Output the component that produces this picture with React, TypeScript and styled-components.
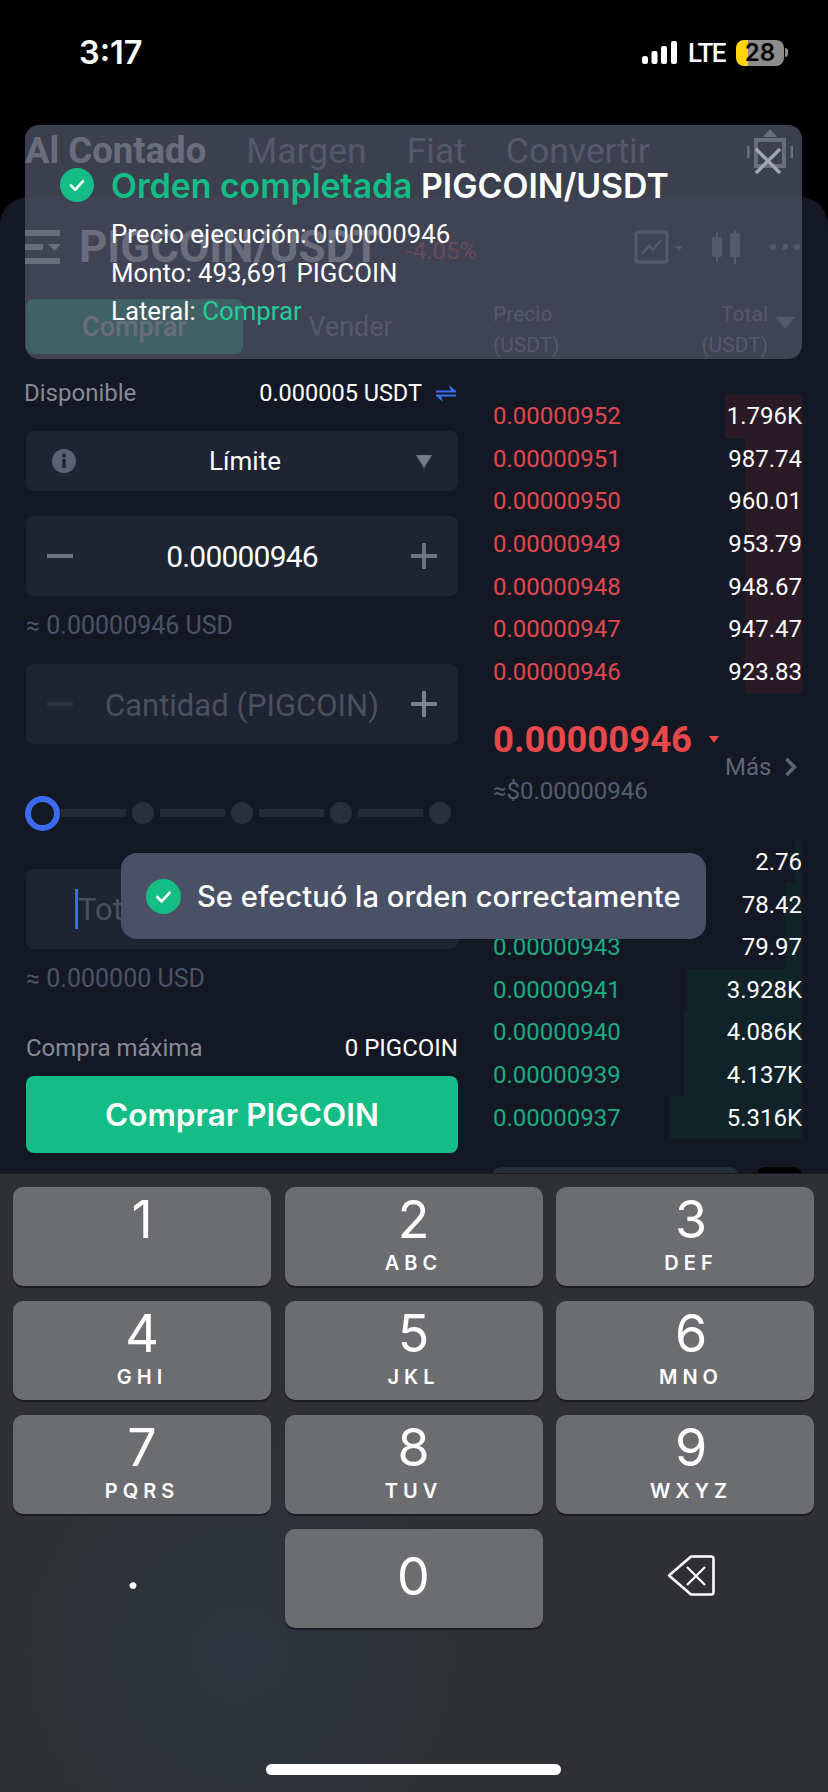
import React from 'react';
import styled, {createGlobalStyle} from 'styled-components';

const GREEN = '#14bd85';
const BLUE = '#3b6cf0';
const RED = '#e0484e';

const GlobalStyle = createGlobalStyle`
  html, body {
    margin: 0;
    padding: 0;
    background: #000;
  }
  * {
    box-sizing: border-box;
  }
`;

const asks = [
  ['0.00000952', '1.796K', 77],
  ['0.00000951', '987.74', 57],
  ['0.00000950', '960.01', 57],
  ['0.00000949', '953.79', 57],
  ['0.00000948', '948.67', 57],
  ['0.00000947', '947.47', 57],
  ['0.00000946', '923.83', 57],
] as const;

const bids = [
  ['0.00000945', '2.76', 7],
  ['0.00000944', '78.42', 17],
  ['0.00000943', '79.97', 17],
  ['0.00000941', '3.928K', 115],
  ['0.00000940', '4.086K', 118],
  ['0.00000939', '4.137K', 118],
  ['0.00000937', '5.316K', 132],
] as const;

const keys = [
  ['1', ''],
  ['2', 'ABC'],
  ['3', 'DEF'],
  ['4', 'GHI'],
  ['5', 'JKL'],
  ['6', 'MNO'],
  ['7', 'PQRS'],
  ['8', 'TUV'],
  ['9', 'WXYZ'],
];

const CheckBadge = ({size}: {size: number}) => (
  <svg width={size} height={size} viewBox="0 0 34 34">
    <circle cx="17" cy="17" r="17" fill={GREEN} />
    <path d="M11 17.5l4.2 4.3 7.8-8.6" fill="none" stroke="#fff" strokeWidth="2.6" strokeLinecap="round" strokeLinejoin="round" />
  </svg>
);

const Minus = ({color}: {color: string}) => (
  <svg width="26" height="26" viewBox="0 0 26 26">
    <path d="M0 13h26" stroke={color} strokeWidth="4" />
  </svg>
);

const Plus = ({color}: {color: string}) => (
  <svg width="26" height="26" viewBox="0 0 26 26">
    <path d="M0 13h26M13 0v26" stroke={color} strokeWidth="4" />
  </svg>
);

const App: React.FC = () => (
  <Phone>
    <GlobalStyle />
    <StatusBar>
      <Clock>3:17</Clock>
      <StatusRight>
        <svg width="35" height="23" viewBox="0 0 35 23">
          <rect x="0" y="15" width="6" height="8" rx="2.5" fill="#fff" />
          <rect x="9.5" y="10" width="6" height="13" rx="2" fill="#fff" />
          <rect x="19" y="5" width="6" height="18" rx="2" fill="#fff" />
          <rect x="29" y="0" width="6" height="23" rx="2" fill="#fff" />
        </svg>
        <Network>LTE</Network>
        <Battery $level={25}>28</Battery>
        <BatteryNub />
      </StatusRight>
    </StatusBar>

    <TopTabs>
      <TopTab $active>Al Contado</TopTab>
      <TopTab>Margen</TopTab>
      <TopTab>Fiat</TopTab>
      <TopTab>Convertir</TopTab>
      <BotIcon width="46" height="44" viewBox="0 0 46 44">
        <path d="M23 0l7 8H16z" fill="#fff" />
        <path d="M9 11h28v26H9z" fill="none" stroke="#fff" strokeWidth="4" />
        <path d="M1 17v12M45 17v12" stroke="#fff" strokeWidth="3" />
      </BotIcon>
    </TopTabs>

    <Sheet>
      <PairHeader>
        <svg width="36" height="34" viewBox="0 0 36 34">
          <path d="M0 0h35v6H0zM0 14h18v6H0zM0 28h35v6H0z" fill="#fff" />
          <path d="M23 14h13l-6.5 7z" fill="#fff" />
        </svg>
        <PairName>PIGCOIN/USDT</PairName>
        <PairChange>-4.05%</PairChange>
        <PairTools>
          <svg width="50" height="34" viewBox="0 0 50 34" fill="none" stroke="#8b90a0">
            <rect x="2" y="2" width="31" height="30" rx="2" strokeWidth="3.5" />
            <path d="M8 24l7-8 4 4 8-10" strokeWidth="2.5" />
            <path d="M41 16h8l-4 5z" fill="#8b90a0" stroke="none" />
          </svg>
          <svg width="30" height="34" viewBox="0 0 30 34" fill="#8b90a0">
            <rect x="0" y="7" width="10" height="20" rx="2" />
            <rect x="4" y="2" width="2" height="30" />
            <rect x="18" y="3" width="10" height="24" rx="2" />
            <rect x="22" y="0" width="2" height="34" />
          </svg>
          <svg width="30" height="6" viewBox="0 0 30 6" fill="#8b90a0">
            <circle cx="3" cy="3" r="3" />
            <circle cx="15" cy="3" r="3" />
            <circle cx="27" cy="3" r="3" />
          </svg>
        </PairTools>
      </PairHeader>

      <Columns>
        <FormColumn>
          <SideTabs>
            <SideTab $active>Comprar</SideTab>
            <SideTab>Vender</SideTab>
          </SideTabs>

          <BalanceRow>
            <Muted>Disponible</Muted>
            <BalanceValue>
              0.000005 USDT
              <svg width="20" height="17" viewBox="0 0 20 17" fill={BLUE}>
                <path d="M0 5.5h20v2H0zM13 0l7 6h-5zM0 9.5h20v2H0zM7 17l-7-6h5z" />
              </svg>
            </BalanceValue>
          </BalanceRow>

          <Select>
            <svg width="24" height="24" viewBox="0 0 24 24">
              <circle cx="12" cy="12" r="12" fill="#5a6173" />
              <rect x="10.2" y="10" width="3.6" height="9" fill="#1e2431" />
              <circle cx="12" cy="6.6" r="2" fill="#1e2431" />
            </svg>
            <SelectLabel>Límite</SelectLabel>
            <SelectCaret />
          </Select>

          <Stepper $mt={25}>
            <Minus color="#6c7282" />
            <StepperValue>0.00000946</StepperValue>
            <Plus color="#6c7282" />
          </Stepper>
          <Hint>≈ 0.00000946 USD</Hint>

          <Stepper $mt={23}>
            <Minus color="#2b3240" />
            <StepperValue $placeholder>Cantidad (PIGCOIN)</StepperValue>
            <Plus color="#7a7f8c" />
          </Stepper>

          <Slider>
            <SliderRing />
            <SliderSegment />
            <SliderDot />
            <SliderSegment />
            <SliderDot />
            <SliderSegment />
            <SliderDot />
            <SliderSegment />
            <SliderDot />
          </Slider>

          <TotalInput>
            <Caret />
            <TotalPlaceholder>Total (USDT)</TotalPlaceholder>
          </TotalInput>
          <Hint>≈ 0.000000 USD</Hint>

          <MaxRow>
            <Muted>Compra máxima</Muted>
            <MaxValue>0 PIGCOIN</MaxValue>
          </MaxRow>
          <BuyButton>Comprar PIGCOIN</BuyButton>
        </FormColumn>

        <BookColumn>
          <BookHead>
            <span>
              Precio
              <br />
              (USDT)
            </span>
            <BookHeadTotal>
              <span>
                Total
                <br />
                (USDT)
              </span>
              <HeadCaret />
            </BookHeadTotal>
          </BookHead>

          <Rows $mt={34}>
            {asks.map(([price, total, depth]) => (
              <BookRow key={price} $depth={depth} $tint="#2a1a25">
                <BookPrice $color={RED}>{price}</BookPrice>
                <BookTotal>{total}</BookTotal>
              </BookRow>
            ))}
          </Rows>

          <Mid>
            <div>
              <MidPrice>
                0.00000946
                <MidArrow />
              </MidPrice>
              <MidFiat>≈$0.00000946</MidFiat>
            </div>
            <MoreLink>
              Más
              <svg width="13" height="20" viewBox="0 0 13 20" fill="none">
                <path d="M2.5 2l8 8-8 8" stroke="#5f6676" strokeWidth="3.5" />
              </svg>
            </MoreLink>
          </Mid>

          <Rows $mt={35}>
            {bids.map(([price, total, depth]) => (
              <BookRow key={price} $depth={depth} $tint="#102328">
                <BookPrice $color="#1cab83">{price}</BookPrice>
                <BookTotal>{total}</BookTotal>
              </BookRow>
            ))}
          </Rows>

          <BookFooter>
            <FooterField />
            <FooterToggle />
          </BookFooter>
        </BookColumn>
      </Columns>
    </Sheet>

    <Keyboard>
      <KeyGrid>
        {keys.map(([digit, letters]) => (
          <Key key={digit}>
            <KeyDigit>{digit}</KeyDigit>
            <KeyLetters>{letters}</KeyLetters>
          </Key>
        ))}
        <PlainKey>
          <PeriodGlyph>.</PeriodGlyph>
        </PlainKey>
        <Key $center>
          <KeyDigit>0</KeyDigit>
        </Key>
        <PlainKey>
          <BackspaceIcon width="48" height="41" viewBox="0 0 48 41" fill="none" stroke="#fff" strokeWidth="2.6" strokeLinejoin="round">
            <path d="M24 1.5h20a2.5 2.5 0 0 1 2.5 2.5v33a2.5 2.5 0 0 1-2.5 2.5H24L2 20.5z" />
            <path d="M20 12l18 18M38 12L20 30" strokeWidth="2.2" />
          </BackspaceIcon>
        </PlainKey>
      </KeyGrid>
      <HomeIndicator />
    </Keyboard>

    <Banner>
      <BannerClose width="28" height="26" viewBox="0 0 28 26">
        <path d="M2 1l24 24M26 1L2 25" stroke="#a2a5b2" strokeWidth="3.5" />
      </BannerClose>
      <BannerTitle>
        <CheckBadge size={34} />
        <span>
          <TitleAccent>Orden completada</TitleAccent> PIGCOIN/USDT
        </span>
      </BannerTitle>
      <BannerLines>
        <div>Precio ejecución: 0.00000946</div>
        <div>Monto: 493,691 PIGCOIN</div>
        <div>
          Lateral: <LineAccent>Comprar</LineAccent>
        </div>
      </BannerLines>
    </Banner>

    <Toast>
      <CheckBadge size={35} />
      Se efectuó la orden correctamente
    </Toast>
  </Phone>
);

const Phone = styled.div`
  position: relative;
  display: flex;
  flex-direction: column;
  width: 828px;
  height: 1792px;
  overflow: hidden;
  background: #000;
  color: #fff;
  font-family: Roboto, 'Liberation Sans', sans-serif;
`;

const StatusBar = styled.div`
  display: flex;
  flex: none;
  align-items: center;
  justify-content: space-between;
  height: 104px;
  padding: 1px 40px 0 79px;
  font-family: Inter, sans-serif;
`;

const Clock = styled.div`
  font-size: 32.5px;
  font-weight: 600;
`;

const StatusRight = styled.div`
  display: flex;
  align-items: center;
`;

const Network = styled.div`
  margin: 0 11px 0 11px;
  font-family: Roboto, sans-serif;
  font-size: 26px;
  font-weight: 500;
  letter-spacing: -1.5px;
`;

const Battery = styled.div<{$level: number}>`
  width: 48px;
  height: 26px;
  border-radius: 8px;
  background: linear-gradient(
    to right,
    #ffd60a ${p => p.$level}%,
    #8c8c8c ${p => p.$level}%
  );
  color: #000;
  font-size: 24px;
  font-weight: 600;
  line-height: 26px;
  text-align: center;
`;

const BatteryNub = styled.div`
  width: 3px;
  height: 9px;
  margin-left: 1px;
  border-radius: 0 3px 3px 0;
  background: #8c8c8c;
`;

const TopTabs = styled.div`
  display: flex;
  flex: none;
  align-items: center;
  gap: 40px;
  height: 93px;
  padding: 0 35px 0 25px;
`;

const TopTab = styled.div<{$active?: boolean}>`
  color: ${p => (p.$active ? '#fff' : '#8b90a0')};
  font-size: ${p => (p.$active ? 36.5 : 35.5)}px;
  font-weight: ${p => (p.$active ? 700 : 400)};
`;

const BotIcon = styled.svg`
  margin-left: auto;
`;

const Sheet = styled.div`
  display: flex;
  flex-direction: column;
  flex: 1;
  min-height: 0;
  padding: 30px 26px 0;
  border-radius: 28px 28px 0 0;
  background: #141824;
`;

const PairHeader = styled.div`
  display: flex;
  align-items: center;
  height: 40px;
  margin-left: -1px;
`;

const PairName = styled.div`
  margin-left: 18px;
  font-size: 44px;
  font-weight: 700;
`;

const PairChange = styled.div`
  margin: 8px 0 0 26px;
  color: ${RED};
  font-size: 24px;
`;

const PairTools = styled.div`
  display: flex;
  align-items: center;
  gap: 28px;
  margin: 0 2px 0 auto;
`;

const Columns = styled.div`
  display: grid;
  grid-template-columns: 432px 1fr;
  column-gap: 35px;
  margin-top: 32px;
`;

const FormColumn = styled.div`
  display: flex;
  flex-direction: column;
`;

const SideTabs = styled.div`
  display: grid;
  grid-template-columns: 217px 1fr;
  height: 55px;
`;

const SideTab = styled.div<{$active?: boolean}>`
  display: flex;
  align-items: center;
  justify-content: center;
  border-radius: 8px;
  background: ${p => (p.$active ? GREEN : 'transparent')};
  color: ${p => (p.$active ? '#fff' : '#8f95a5')};
  font-size: 27px;
  font-weight: ${p => (p.$active ? 500 : 400)};
`;

const BalanceRow = styled.div`
  display: flex;
  align-items: center;
  justify-content: space-between;
  height: 30px;
  margin: 24px 2px 0 -2px;
`;

const Muted = styled.div`
  color: #858a99;
  font-size: 24px;
`;

const BalanceValue = styled.div`
  display: flex;
  align-items: center;
  gap: 14px;
  font-size: 23.5px;
`;

const Select = styled.div`
  display: grid;
  grid-template-columns: 1fr auto 1fr;
  align-items: center;
  height: 60px;
  margin-top: 23px;
  padding: 0 26px;
  border-radius: 8px;
  background: #1e2431;
`;

const SelectLabel = styled.div`
  margin-left: 6px;
  font-size: 26px;
`;

const SelectCaret = styled.div`
  justify-self: end;
  width: 0;
  height: 0;
  border-top: 13px solid #747a8a;
  border-left: 8px solid transparent;
  border-right: 8px solid transparent;
`;

const Stepper = styled.div<{$mt: number}>`
  display: flex;
  align-items: center;
  justify-content: space-between;
  height: 80px;
  margin-top: ${p => p.$mt}px;
  padding: 0 21px;
  border-radius: 8px;
  background: #1e2431;
`;

const StepperValue = styled.div<{$placeholder?: boolean}>`
  flex: 1;
  padding-top: ${p => (p.$placeholder ? 2 : 0)}px;
  color: ${p => (p.$placeholder ? '#4a5060' : '#fff')};
  font-size: ${p => (p.$placeholder ? 31 : 30)}px;
  letter-spacing: ${p => (p.$placeholder ? 0 : -0.8)}px;
  text-align: center;
`;

const Hint = styled.div`
  height: 30px;
  margin-top: 15px;
  color: #4c5364;
  font-size: 25px;
  line-height: 30px;
`;

const Slider = styled.div`
  display: flex;
  align-items: center;
  gap: 6px;
  height: 36px;
  margin: 51px 0 0 -1px;
`;

const SliderRing = styled.div`
  flex: none;
  width: 35px;
  height: 35px;
  margin-right: -5px;
  border: 6px solid ${BLUE};
  border-radius: 50%;
`;

const SliderDot = styled.div`
  flex: none;
  width: 22px;
  height: 22px;
  border-radius: 50%;
  background: #2a2f3e;
`;

const SliderSegment = styled.div`
  flex: none;
  width: 65px;
  height: 8px;
  background: #242a38;
`;

const TotalInput = styled.div`
  display: flex;
  align-items: center;
  height: 80px;
  margin-top: 38px;
  padding-left: 49px;
  border-radius: 8px;
  background: #1e2431;
`;

const Caret = styled.div`
  width: 3px;
  height: 40px;
  background: ${BLUE};
`;

const TotalPlaceholder = styled.div`
  color: #4a5060;
  font-size: 31px;
`;

const MaxRow = styled.div`
  display: flex;
  align-items: center;
  justify-content: space-between;
  height: 30px;
  margin-top: 39px;
`;

const MaxValue = styled.div`
  font-size: 24px;
`;

const BuyButton = styled.div`
  display: flex;
  align-items: center;
  justify-content: center;
  height: 77px;
  margin-top: 13px;
  border-radius: 8px;
  background: ${GREEN};
  font-family: Inter, sans-serif;
  font-size: 31.5px;
  font-weight: 600;
`;

const BookColumn = styled.div`
  display: flex;
  flex-direction: column;
`;

const BookHead = styled.div`
  display: flex;
  justify-content: space-between;
  height: 62px;
  color: #8a8f9e;
  font-size: 21px;
  line-height: 31px;
`;

const BookHeadTotal = styled.div`
  display: flex;
  align-items: flex-start;
  gap: 7px;
  margin-right: 7px;
  text-align: right;
`;

const HeadCaret = styled.div`
  width: 0;
  height: 0;
  margin-top: 18px;
  border-top: 12px solid #8a8f9e;
  border-left: 10px solid transparent;
  border-right: 10px solid transparent;
`;

const Rows = styled.div<{$mt: number}>`
  margin-top: ${p => p.$mt}px;
`;

const BookRow = styled.div<{$depth: number; $tint: string}>`
  display: flex;
  align-items: center;
  justify-content: space-between;
  height: 42.6px;
  background: linear-gradient(
    to left,
    ${p => p.$tint} ${p => p.$depth}px,
    transparent ${p => p.$depth}px
  );
`;

const BookPrice = styled.div<{$color: string}>`
  color: ${p => p.$color};
  font-size: 24px;
`;

const BookTotal = styled.div`
  font-size: 24px;
`;

const BookFooter = styled.div`
  display: flex;
  justify-content: space-between;
  height: 6px;
  margin-top: 28px;
  overflow: hidden;
`;

const FooterField = styled.div`
  width: 245px;
  height: 20px;
  border-radius: 8px;
  background: #262c3a;
`;

const FooterToggle = styled.div`
  width: 45px;
  height: 20px;
  border-radius: 8px;
  background: #000;
`;

const Mid = styled.div`
  display: grid;
  grid-template-columns: 232px 1fr;
  align-items: center;
  margin-top: 24.6px;
`;

const MidPrice = styled.div`
  display: flex;
  align-items: center;
  height: 44px;
  color: #e8484a;
  font-size: 36.5px;
  font-weight: 700;
`;

const MidArrow = styled.div`
  width: 0;
  height: 0;
  margin-left: 17px;
  border-top: 7px solid #e8484a;
  border-left: 5.5px solid transparent;
  border-right: 5.5px solid transparent;
`;

const MidFiat = styled.div`
  height: 30px;
  margin-top: 14px;
  color: #565d6e;
  font-size: 24px;
  line-height: 30px;
`;

const MoreLink = styled.div`
  display: flex;
  align-items: center;
  gap: 13px;
  margin-top: 11px;
  color: #5f6676;
  font-size: 24px;
`;

const Keyboard = styled.div`
  display: flex;
  flex: none;
  flex-direction: column;
  align-items: center;
  height: 618px;
  padding: 13px 14px 17px 13px;
  background:
    radial-gradient(circle at 240px 480px, #2c3440 0, rgba(44, 52, 64, 0) 230px),
    #2f3033;
`;

const KeyGrid = styled.div`
  display: grid;
  grid-template-columns: repeat(3, 258px);
  grid-auto-rows: 99px;
  gap: 15px 13.5px;
`;

const Key = styled.div<{$center?: boolean}>`
  display: flex;
  flex-direction: column;
  align-items: center;
  justify-content: ${p => (p.$center ? 'center' : 'flex-start')};
  padding-top: ${p => (p.$center ? 0 : 7)}px;
  padding-bottom: ${p => (p.$center ? 4 : 0)}px;
  border-radius: 10px;
  background: #6b6d71;
  box-shadow: 0 2px 0 #1b1c1f;

  &:nth-child(3n) {
    padding-left: 12px;
  }
`;

const PlainKey = styled.div`
  display: flex;
  align-items: center;
  justify-content: center;
`;

const KeyDigit = styled.div`
  font-family: Inter, sans-serif;
  font-size: 52px;
  line-height: 52px;
`;

const KeyLetters = styled.div`
  height: 22px;
  margin-top: 6px;
  font-family: Inter, sans-serif;
  font-size: 20px;
  font-weight: 600;
  line-height: 22px;
  letter-spacing: 5px;
`;

const PeriodGlyph = styled(KeyDigit)`
  margin: 0 18px 16px 0;
`;

const BackspaceIcon = styled.svg`
  margin: 0 0 6px 12px;
`;

const HomeIndicator = styled.div`
  width: 295px;
  height: 11px;
  margin-top: auto;
  border-radius: 6px;
  background: #fff;
`;

const Banner = styled.div`
  position: absolute;
  left: 25px;
  top: 125px;
  width: 777px;
  height: 234px;
  padding: 43px 35px;
  border-radius: 14px;
  background: rgba(73, 77, 95, 0.82);
`;

const BannerClose = styled.svg`
  position: absolute;
  top: 23px;
  right: 20px;
`;

const BannerTitle = styled.div`
  display: flex;
  align-items: center;
  gap: 17px;
  height: 34px;
  font-family: Inter, sans-serif;
  font-size: 33.8px;
  font-weight: 600;
`;

const TitleAccent = styled.span`
  color: ${GREEN};
`;

const BannerLines = styled.div`
  margin: 13px 0 0 51px;
  font-size: 25.8px;
  line-height: 38.5px;
`;

const LineAccent = styled.span`
  color: #1ecf9a;
`;

const Toast = styled.div`
  position: absolute;
  left: 121px;
  top: 853px;
  display: flex;
  align-items: center;
  gap: 16px;
  width: 585px;
  height: 86px;
  padding-left: 25px;
  border-radius: 16px;
  background: #4a5065;
  font-family: Inter, sans-serif;
  font-size: 29.2px;
  font-weight: 500;
`;

export default App;
